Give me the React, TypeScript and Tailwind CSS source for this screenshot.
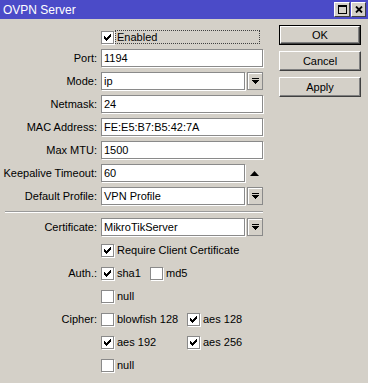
import type { ReactNode } from 'react';

const font = { fontFamily: '"Liberation Sans", Arial, sans-serif' };

function Check({ on }: { on?: boolean }) {
  return (
    <div className="relative h-[13px] w-[13px] shrink-0 border border-[#8a8a8a] bg-white shadow-[1px_1px_0_#fff]">
      {on && (
        <svg width="7" height="7" viewBox="0 0 7 7" className="absolute left-[2px] top-[2px]" shapeRendering="crispEdges">
          <rect x="6" y="0" width="1" height="1" />
          <rect x="5" y="1" width="2" height="1" />
          <rect x="0" y="2" width="1" height="1" />
          <rect x="4" y="2" width="3" height="1" />
          <rect x="0" y="3" width="2" height="1" />
          <rect x="3" y="3" width="3" height="1" />
          <rect x="0" y="4" width="5" height="1" />
          <rect x="1" y="5" width="3" height="1" />
          <rect x="2" y="6" width="1" height="1" />
        </svg>
      )}
    </div>
  );
}

function CheckItem({ on, label, w }: { on?: boolean; label: string; w?: string }) {
  return (
    <div className={`flex items-center gap-[3px] ${w ?? ''}`}>
      <Check on={on} />
      <span>{label}</span>
    </div>
  );
}

function Row({ label, children, className }: { label?: string; children: ReactNode; className?: string }) {
  return (
    <div className={`flex h-[18px] items-center ${className ?? ''}`}>
      <div className="w-[97px] whitespace-nowrap text-right">{label}</div>
      <div className="ml-[4px] flex items-center">{children}</div>
    </div>
  );
}

function Field({ value, w = 'w-[162px]' }: { value: string; w?: string }) {
  return (
    <div className={`h-[18px] ${w} border border-[#8a8a8a] bg-white pl-[2px] leading-[16px] shadow-[1px_1px_0_#fff]`}>{value}</div>
  );
}

function Combo({ value }: { value: string }) {
  return (
    <div className="flex">
      <Field value={value} w="w-[144px]" />
      <div className="ml-[2px] flex h-[18px] w-[16px] items-center justify-center border border-[#8a8a8a] bg-[#d4d0c8] shadow-[inset_1px_1px_0_#fff]">
        <svg width="7" height="7" viewBox="0 0 7 7" shapeRendering="crispEdges">
          <rect x="0" y="0" width="7" height="1" />
          <rect x="0" y="2" width="7" height="1" />
          <rect x="1" y="3" width="5" height="1" />
          <rect x="2" y="4" width="3" height="1" />
          <rect x="3" y="5" width="1" height="1" />
        </svg>
      </div>
    </div>
  );
}

function Btn({ label, def }: { label: string; def?: boolean }) {
  return (
    <div className={`h-[20px] w-[82px] ${def ? 'border border-black' : ''}`}>
      <div className="flex h-full w-full items-center justify-center border border-t-white border-l-white border-r-[#404040] border-b-[#404040] shadow-[inset_-1px_-1px_0_#808080]">
        {label}
      </div>
    </div>
  );
}

export default function App() {
  return (
    <div className="flex h-[383px] w-[368px] flex-col bg-[#d4d0c8] text-[11px] text-black" style={font}>
      <div className="flex h-[19px] items-center bg-[#4b4bc8] pl-[3px] pr-[2px] text-[12px] text-white">
        <span className="flex-1">OVPN Server</span>
        <div className="flex gap-[1px]">
          <div className="flex h-[15px] w-[16px] items-center justify-center border border-t-white border-l-white border-r-[#404040] border-b-[#404040] bg-[#d4d0c8]">
            <div className="h-[9px] w-[9px] border border-t-2 border-black" />
          </div>
          <div className="flex h-[15px] w-[15px] items-center justify-center border border-t-white border-l-white border-r-[#404040] border-b-[#404040] bg-[#d4d0c8]">
            <svg width="8" height="7" viewBox="0 0 8 7">
              <path d="M1 0.5 L7 6.5 M7 0.5 L1 6.5" stroke="black" strokeWidth="1.8" />
            </svg>
          </div>
        </div>
      </div>

      <div className="flex">
        <div className="flex w-[279px] flex-col">
          <Row className="mt-[9px]">
            <Check on />
            <div className="ml-[1px] h-[14px] w-[145px] border border-dotted border-[#404040] pl-[1px] leading-[12px]">Enabled</div>
          </Row>
          <div className="mt-[3px] flex flex-col gap-[5px]">
            <Row label="Port:"><Field value="1194" /></Row>
            <Row label="Mode:"><Combo value="ip" /></Row>
            <Row label="Netmask:"><Field value="24" /></Row>
            <Row label="MAC Address:"><Field value="FE:E5:B7:B5:42:7A" /></Row>
            <Row label="Max MTU:"><Field value="1500" /></Row>
            <Row label="Keepalive Timeout:">
              <Field value="60" w="w-[144px]" />
              <svg width="9" height="5" viewBox="0 0 9 5" className="ml-[5px]">
                <path d="M0 5 L4.5 0 L9 5 Z" />
              </svg>
            </Row>
            <Row label="Default Profile:"><Combo value="VPN Profile" /></Row>
          </div>
          <div className="ml-[5px] mt-[6px] h-[2px] w-[258px] border-t border-b border-t-[#9a9a9a] border-b-white" />
          <Row label="Certificate:" className="mt-[5px]"><Combo value="MikroTikServer" /></Row>
          <div className="mt-[5px] flex flex-col gap-[5px]">
            <Row><CheckItem on label="Require Client Certificate" /></Row>
            <Row label="Auth.:">
              <CheckItem on label="sha1" w="w-[49px]" />
              <CheckItem label="md5" />
            </Row>
            <Row><CheckItem label="null" /></Row>
            <Row label="Cipher:">
              <CheckItem label="blowfish 128" w="w-[86px]" />
              <CheckItem on label="aes 128" />
            </Row>
            <Row>
              <CheckItem on label="aes 192" w="w-[86px]" />
              <CheckItem on label="aes 256" />
            </Row>
            <Row><CheckItem label="null" /></Row>
          </div>
        </div>

        <div className="mt-[6px] flex flex-col gap-[6px]">
          <Btn label="OK" def />
          <Btn label="Cancel" />
          <Btn label="Apply" />
        </div>
      </div>
    </div>
  );
}
